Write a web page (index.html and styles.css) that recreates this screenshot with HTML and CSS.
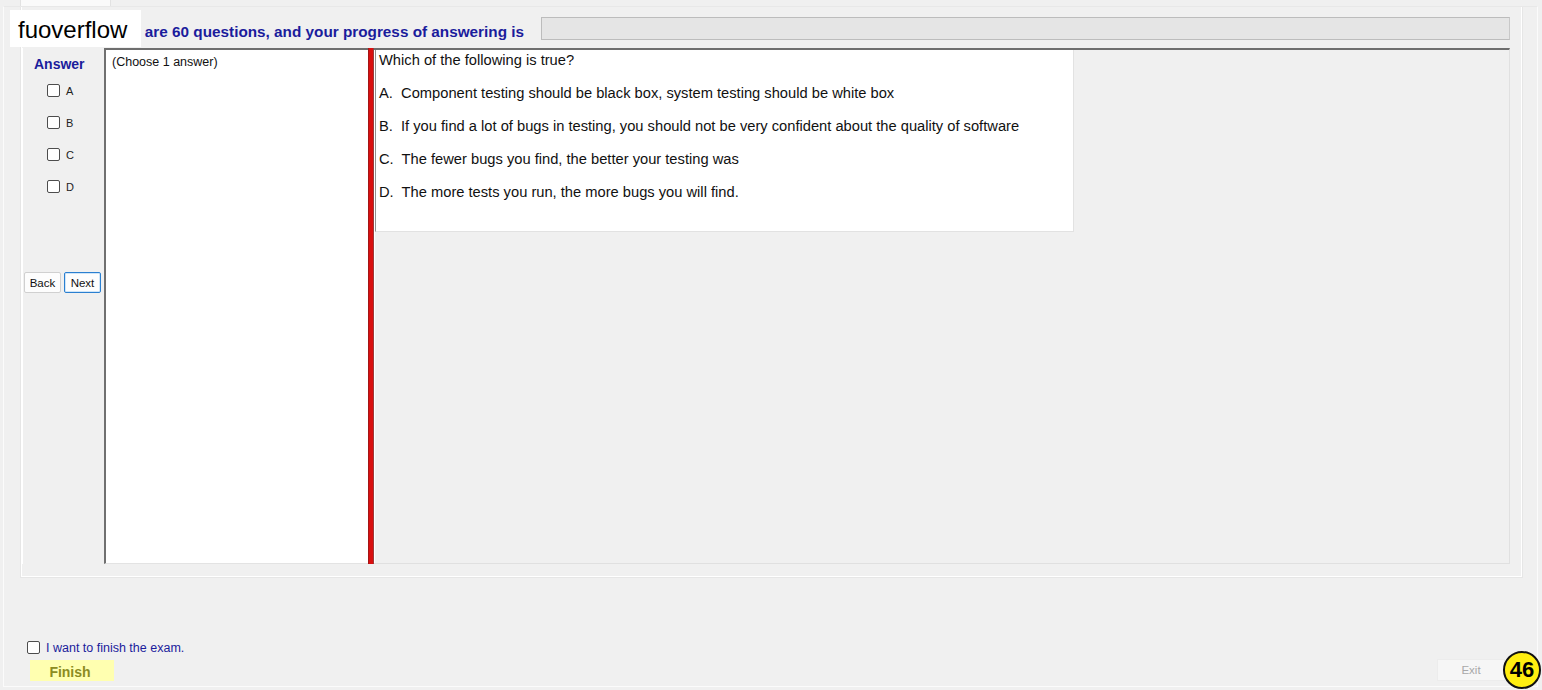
FILE: index.html
```html
<!DOCTYPE html>
<html>
<head>
<meta charset="utf-8">
<link rel="stylesheet" href="styles.css">
</head>
<body>
<div class="window">
  <div class="tabstrip"><div class="tab"></div></div>
  <div class="outer">
    <div class="group">
      <div class="header">
        <div class="title">There are 60 questions, and your progress of answering is</div>
        <div class="progress"></div>
      </div>
      <div class="main">
        <div class="answers">
          <div class="answer-title">Answer</div>
          <div class="opts">
            <label class="opt"><span class="cb"></span>A</label>
            <label class="opt"><span class="cb"></span>B</label>
            <label class="opt"><span class="cb"></span>C</label>
            <label class="opt"><span class="cb"></span>D</label>
          </div>
          <div class="navs">
            <button class="btn">Back</button>
            <button class="btn next">Next</button>
          </div>
        </div>
        <div class="list">(Choose 1 answer)</div>
        <div class="splitter"></div>
        <div class="right">
          <div class="question">
            <p class="q">Which of the following is true?</p>
            <p class="a">A.&nbsp; Component testing should be black box, system testing should be white box</p>
            <p class="a">B.&nbsp; If you find a lot of bugs in testing, you should not be very confident about the quality of software</p>
            <p class="a">C.&nbsp; The fewer bugs you find, the better your testing was</p>
            <p class="a">D.&nbsp; The more tests you run, the more bugs you will find.</p>
          </div>
        </div>
      </div>
    </div>
    <div class="footer">
      <div class="finish-col">
        <label class="finish-check"><span class="cb"></span>I want to finish the exam.</label>
        <button class="finish">Finish</button>
      </div>
      <button class="exit">Exit</button>
    </div>
  </div>
  <div class="watermark">fuoverflow</div>
  <div class="badge">46</div>
</div>
</body>
</html>
```
FILE: styles.css
```css
* { box-sizing: border-box; }
html, body { margin: 0; padding: 0; }
body {
  background: #f0f0f0;
  font-family: "Liberation Sans", Arial, sans-serif;
  width: 1542px;
  height: 690px;
  overflow: hidden;
}
.window { position: relative; width: 1542px; height: 690px; }
.tabstrip { height: 6px; padding-left: 20px; }
.tab {
  width: 91px; height: 6px;
  background: #fafafa;
  border-left: 1px solid #e2e2e2;
  border-right: 1px solid #e2e2e2;
}
.outer {
  margin: 0 4px 0 3px;
  height: 681px;
  border: 1px solid #fbfbfb;
  border-top-color: #e8e8e8;
  display: flex;
  flex-direction: column;
}
.group {
  margin-left: 16px;
  width: 1503px;
  height: 571px;
  border: 1px solid #e6e6e6;
  border-top: none;
  box-shadow: inset 1px 0 0 #fff, inset -1px 0 0 #fff, inset 0 -1px 0 #fff;
  display: flex;
  flex-direction: column;
}
.header {
  height: 41px;
  display: flex;
  align-items: flex-start;
  padding-top: 10px;
}
.title {
  width: 503px;
  padding-top: 6px;
  font-size: 15.3px;
  font-weight: bold;
  color: #1b1c9c;
  white-space: nowrap;
  overflow: hidden;
  text-align: right;
}
.progress {
  width: 969px;
  height: 23px;
  background: #e5e5e5;
  border: 1px solid #bcbcbc;
  border-right-color: #c8c8c8;
  margin-left: auto;
  margin-right: 12px;
}
.main {
  margin-left: 1px;
  width: 1488px;
  height: 516px;
  display: flex;
}
.answers {
  width: 82px;
  border-left: 1px solid #fff;
  display: flex;
  flex-direction: column;
}
.answer-title {
  margin-top: 8px;
  margin-left: 11px;
  font-size: 14px;
  font-weight: bold;
  color: #1b1c9c;
}
.opts { display: flex; flex-direction: column; gap: 19px; margin-top: 12px; margin-left: 24px; }
.opt {
  display: flex; align-items: center; gap: 6px;
  font-size: 11px; color: #222; height: 13px;
}
.cb {
  display: inline-block;
  width: 13px; height: 13px;
  border: 1px solid #4d4d4d;
  border-radius: 2px;
  background: #fff;
}
.navs { display: flex; gap: 3px; margin-top: 79px; margin-left: 1px; }
.btn {
  height: 21px;
  width: 37px;
  padding: 0;
  font-family: "Liberation Sans", Arial, sans-serif;
  font-size: 11.5px;
  color: #111;
  background: #fdfdfd;
  border: 1px solid #d0d0d0;
  border-radius: 2px;
}
.btn.next { border: 1px solid #2a7fd0; box-shadow: inset 0 0 0 1px #cfe5f8; }
.list {
  width: 264px;
  background: #fff;
  border-left: 2px solid #707070;
  border-top: 2px solid #6e6e6e;
  border-bottom: 1px solid #e3e3e3;
  padding: 5px 0 0 6px;
  font-size: 12.5px;
  color: #111;
}
.splitter {
  width: 6px;
  background: #d90f0f;
  border-left: 1px solid #a31616;
  border-right: 1px solid #9c3a3a;
}
.right {
  flex: 1;
  border-top: 2px solid #6e6e6e;
  border-right: 1px solid #e0e0e0;
  border-bottom: 1px solid #e0e0e0;
  box-shadow: inset 1px 0 0 #fff;
  padding-left: 1px;
}
.question {
  width: 699px;
  height: 182px;
  background: #fff;
  border-left: 1px solid #909090;
  border-right: 1px solid #e2e2e2;
  border-bottom: 1px solid #e2e2e2;
  padding: 2px 0 0 3px;
  font-size: 14.7px;
  color: #111;
}
.question p { margin: 0; line-height: 17px; }
.question p.a { margin-top: 16px; }
.footer {
  flex: 1;
  display: flex;
  align-items: flex-end;
  justify-content: space-between;
  padding: 0 33px 5px 23px;
}
.finish-col { display: flex; flex-direction: column; }
.finish-check {
  display: flex; align-items: center; gap: 6px;
  font-size: 12.5px; color: #1b1c9c;
  height: 14px;
}
.finish-check .cb { margin-top: -2px; }
.finish {
  margin-top: 5px;
  margin-left: 3px;
  width: 84px;
  height: 21px;
  background: #ffffb0;
  border: none;
  font-family: "Liberation Sans", Arial, sans-serif;
  font-size: 14px;
  font-weight: bold;
  color: #8c8c22;
  padding: 2px 4px 0 0;
}
.exit {
  width: 68px;
  height: 22px;
  background: #f6f6f6;
  border: 1px solid #ececec;
  font-family: "Liberation Sans", Arial, sans-serif;
  font-size: 11.5px;
  color: #a8a8a8;
  transform: translateX(1px);
}
.watermark {
  position: absolute;
  left: 10px; top: 10px;
  width: 131px; height: 37px;
  background: #fff;
  font-size: 24px;
  color: #000;
  padding: 6px 0 0 8px;
  line-height: 28px;
}
.badge {
  position: absolute;
  left: 1503px; top: 651px;
  width: 38px; height: 38px;
  border-radius: 50%;
  background: #ffee11;
  border: 2px solid #111;
  font-size: 22px;
  font-weight: bold;
  color: #000;
  display: flex; align-items: center; justify-content: center;
}
```
